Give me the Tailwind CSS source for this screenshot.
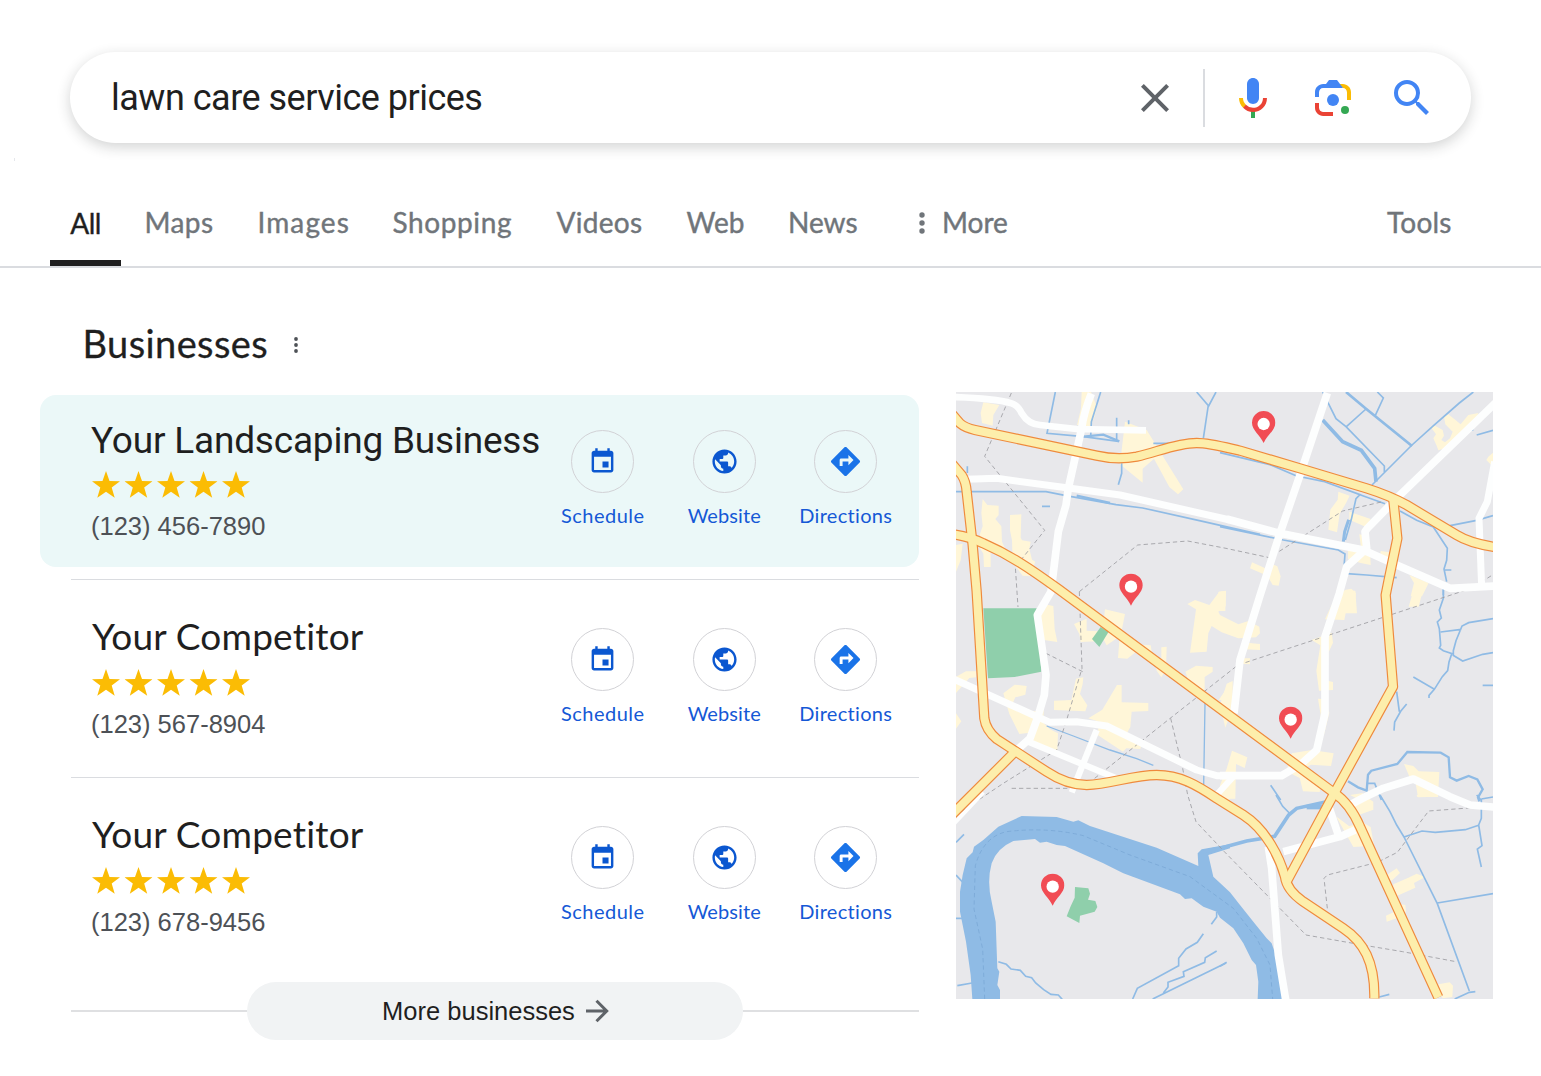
<!DOCTYPE html>
<html lang="en">
<head>
    <meta charset="UTF-8">
    <meta name="viewport" content="width=device-width, initial-scale=1.0">
    <title>lawn care service prices</title>
    <script src="https://cdn.jsdelivr.net/npm/@tailwindcss/browser@4"></script>
</head>
<body class="bg-white w-[1541px] h-[1076px] overflow-hidden font-[Lato,sans-serif] [font-variant-ligatures:none] text-[#1f1f1f]">

    <!-- Icon sprite -->
    <svg class="hidden">
        <symbol id="star" viewBox="0 0 28 27"><path fill="#fbbc04" d="M14 0l3.5 9.9 10.5.3-8.3 6.4 3 10.2-8.7-6-8.7 6 3-10.2L0 10.2l10.5-.3z"/></symbol>
        <symbol id="stars" viewBox="0 0 158 27">
            <use href="#star" x="0" width="28" height="27"/><use href="#star" x="32.5" width="28" height="27"/><use href="#star" x="65" width="28" height="27"/><use href="#star" x="97.5" width="28" height="27"/><use href="#star" x="130" width="28" height="27"/>
        </symbol>
        <symbol id="event" viewBox="0 0 24 24"><path fill="#0b57d0" d="M17 12h-5v5h5v-5zM16 1v2H8V1H6v2H5c-1.11 0-1.99.9-1.99 2L3 19c0 1.1.89 2 2 2h14c1.1 0 2-.9 2-2V5c0-1.1-.9-2-2-2h-1V1h-2zm3 18H5V8h14v11z"/></symbol>
        <symbol id="globe" viewBox="0 0 24 24"><path fill="#0b57d0" d="M12 2C6.48 2 2 6.48 2 12s4.48 10 10 10 10-4.48 10-10S17.52 2 12 2zm-1 17.93c-3.95-.49-7-3.85-7-7.93 0-.62.08-1.21.21-1.79L9 15v1c0 1.1.9 2 2 2v1.93zm6.9-2.54c-.26-.81-1-1.39-1.9-1.39h-1v-3c0-.55-.45-1-1-1H8v-2h2c.55 0 1-.45 1-1V7h2c1.1 0 2-.9 2-2v-.41c2.93 1.19 5 4.06 5 7.41 0 2.08-.8 3.97-2.1 5.39z"/></symbol>
        <symbol id="directions" viewBox="0 0 24 24"><path fill="#1a73e8" d="M21.71 11.29l-9-9c-.39-.39-1.02-.39-1.41 0l-9 9c-.39.39-.39 1.02 0 1.41l9 9c.39.39 1.02.39 1.41 0l9-9c.39-.38.39-1.01 0-1.41zM14 14.5V12h-4v3H8v-4c0-.55.45-1 1-1h5V7.5l3.5 3.5-3.5 3.5z"/></symbol>
        <symbol id="pin" viewBox="-36 -38 72 98"><path fill="#f14c54" d="M0 59C-11 35-35 20-35-2a35 35 0 1 1 70 0C35 20 11 35 0 59z"/><circle cy="2" r="18.5" fill="#fff"/></symbol>
    </svg>

    <!-- Search bar -->
    <header class="pt-[52px] pl-[70px]">
        <div class="flex items-center w-[1401px] h-[91px] rounded-full bg-white pl-[41px] pr-[35px] shadow-[0_4px_14px_rgba(32,33,36,0.2)]">
            <span class="flex-1 font-[Roboto,sans-serif] text-[36px] leading-[44px] tracking-[-0.5px]">lawn care service prices</span>
            <svg class="w-12 h-12" viewBox="0 0 24 24"><path fill="#5f6368" d="M19 6.41L17.59 5 12 10.59 6.41 5 5 6.41 10.59 12 5 17.59 6.41 19 12 13.41 17.59 19 19 17.59 13.41 12z"/></svg>
            <div class="w-0.5 h-[58px] bg-[#dadce0] ml-6 mr-6"></div>
            <svg class="w-12 h-12" viewBox="0 0 24 24">
                <path fill="#4285f4" d="M12 15c1.66 0 3-1.31 3-2.97V5.01C15 3.35 13.66 2 12 2S9 3.34 9 5.01v7.02C9 13.69 10.34 15 12 15z"/>
                <path fill="#34a853" d="M11 18.08h2V22h-2z"/>
                <path fill="#fbbc05" d="M7.05 16.87C5.78 15.54 5 14.04 5 12h2c0 1.45.56 2.42 1.47 3.38v.32l-1.15 1.18z"/>
                <path fill="#ea4335" d="M12 16.93a4.97 5.25 0 0 1-3.54-1.55l-1.41 1.49C8.31 18.21 10.07 19 12 19c3.87 0 6.99-2.92 6.99-7H17c0 2.92-2.24 4.93-5 4.93z"/>
            </svg>
            <svg class="w-12 h-12 ml-8" viewBox="0 0 192 192">
                <circle fill="#34a853" cx="144" cy="144" r="16"/>
                <circle fill="#4285f4" cx="96" cy="104" r="24"/>
                <path fill="#ea4335" d="M24 135.2C24 153.31 38.69 168 56.8 168H96v-16l-40.1-.1c-8.8 0-15.9-8.19-15.9-17.9v-18H24z"/>
                <path fill="#fbbc04" d="M168 72.8C168 54.69 153.31 40 135.2 40H116l20 16c8.8 0 16 8.29 16 18v30h16z"/>
                <path fill="#4285f4" d="M112 24H80L68 40H56.8C38.69 40 24 54.69 24 72.8V92h16V74c0-9.71 7.2-18 16-18h80z"/>
            </svg>
            <svg class="w-12 h-12 ml-[31px]" viewBox="0 0 24 24"><path fill="#4285f4" d="M15.5 14h-.79l-.28-.27A6.471 6.471 0 0 0 16 9.5 6.5 6.5 0 1 0 9.5 16c1.61 0 3.09-.59 4.23-1.57l.27.28v.79l5 4.99L20.49 19l-4.99-5zm-6 0C7.01 14 5 11.99 5 9.5S7.01 5 9.5 5 14 7.01 14 9.5 11.99 14 9.5 14z"/></svg>
        </div>
    </header>
    <div class="w-px h-[3px] bg-gray-200 ml-[14px] mt-[15px]"></div>

    <!-- Tabs -->
    <nav class="flex h-[107px] border-b-2 border-[#dadce0] pl-[50px] pt-[43px] text-[28px] leading-[36px] text-[#70757a] [-webkit-text-stroke:0.4px]">
        <a class="w-[71px] h-[62px] pt-px border-b-6 border-[#1f1f1f] text-center text-[#1f1f1f] tracking-[-0.6px]">All</a>
        <a class="w-[113px] ml-[23.5px] tracking-[0.4px]">Maps</a>
        <a class="w-[135px] tracking-[1.1px]">Images</a>
        <a class="w-[164px] tracking-[0.6px]">Shopping</a>
        <a class="w-[130px] tracking-[0.3px]">Videos</a>
        <a class="w-[101.5px]">Web</a>
        <a class="w-[131px]">News</a>
        <svg class="w-[6px] h-[24px] mt-[8px]" viewBox="0 0 6 24" fill="#70757a" stroke="none"><circle cx="3" cy="3" r="2.7"/><circle cx="3" cy="11" r="2.7"/><circle cx="3" cy="19" r="2.7"/></svg>
        <a class="ml-[17px] w-[445px]">More</a>
        <a class="tracking-[0.2px]">Tools</a>
    </nav>

    <main class="flex">
        <section class="w-[919px]">
            <div class="flex items-center h-[48px] mt-[51px] ml-[82.5px]">
                <h1 class="text-[38px] leading-[48px] tracking-[0.4px] [-webkit-text-stroke:0.3px]">Businesses</h1>
                <svg class="w-[4px] h-[16px] ml-[26px] mt-[4px]" viewBox="0 0 4 16" fill="#4d5156"><circle cx="2" cy="2" r="1.9"/><circle cx="2" cy="8" r="1.9"/><circle cx="2" cy="14" r="1.9"/></svg>
            </div>

            <!-- Highlighted business -->
            <article class="flex mt-[28px] ml-[40px] h-[172px] rounded-2xl bg-[#ebf8f8] pl-[51px]">
                <div class="w-[451px] pt-[24px]">
                    <h2 class="font-[Roboto,sans-serif] text-[37px] leading-[44px] tracking-[-0.2px] whitespace-nowrap">Your Landscaping Business</h2>
                    <svg class="w-[158px] h-[27px] ml-px mt-[8px]"><use href="#stars"/></svg>
                    <p class="font-[Liberation_Sans,sans-serif] text-[25.5px] leading-[30px] mt-[13px] text-[#4d5156]">(123) 456-7890</p>
                </div>
                <div class="flex pt-[35px] text-[20px] leading-[24px] text-[#1558d6] text-center">
                    <a class="w-[121.5px] tracking-[0.5px]"><span class="flex items-center justify-center size-[63px] mx-auto mb-[10px] rounded-full border border-[#d2d2d6]"><svg class="size-[29px]"><use href="#event"/></svg></span>Schedule</a>
                    <a class="w-[121.5px] tracking-[0.1px]"><span class="flex items-center justify-center size-[63px] mx-auto mb-[10px] rounded-full border border-[#d2d2d6]"><svg class="size-[29px]"><use href="#globe"/></svg></span>Website</a>
                    <a class="w-[121.5px] tracking-[0.3px]"><span class="flex items-center justify-center size-[63px] mx-auto mb-[10px] rounded-full border border-[#d2d2d6]"><svg class="size-[35px]"><use href="#directions"/></svg></span>Directions</a>
                </div>
            </article>
            <hr class="mt-3 mb-[13px] ml-[71px] border-[#dadce0]">

            <article class="flex ml-[40px] h-[172px] pl-[51px]">
                <div class="w-[451px] pt-[21px]">
                    <h2 class="text-[37px] leading-[44px] tracking-[0.2px] ml-px whitespace-nowrap">Your Competitor</h2>
                    <svg class="w-[158px] h-[27px] ml-px mt-[11px]"><use href="#stars"/></svg>
                    <p class="font-[Liberation_Sans,sans-serif] text-[25.5px] leading-[30px] mt-[13px] text-[#4d5156]">(123) 567-8904</p>
                </div>
                <div class="flex pt-[35px] text-[20px] leading-[24px] text-[#1558d6] text-center">
                    <a class="w-[121.5px] tracking-[0.5px]"><span class="flex items-center justify-center size-[63px] mx-auto mb-[10px] rounded-full border border-[#d2d2d6]"><svg class="size-[29px]"><use href="#event"/></svg></span>Schedule</a>
                    <a class="w-[121.5px] tracking-[0.1px]"><span class="flex items-center justify-center size-[63px] mx-auto mb-[10px] rounded-full border border-[#d2d2d6]"><svg class="size-[29px]"><use href="#globe"/></svg></span>Website</a>
                    <a class="w-[121.5px] tracking-[0.3px]"><span class="flex items-center justify-center size-[63px] mx-auto mb-[10px] rounded-full border border-[#d2d2d6]"><svg class="size-[35px]"><use href="#directions"/></svg></span>Directions</a>
                </div>
            </article>
            <hr class="mt-3 mb-[13px] ml-[71px] border-[#dadce0]">

            <article class="flex ml-[40px] h-[172px] pl-[51px]">
                <div class="w-[451px] pt-[21px]">
                    <h2 class="text-[37px] leading-[44px] tracking-[0.2px] ml-px whitespace-nowrap">Your Competitor</h2>
                    <svg class="w-[158px] h-[27px] ml-px mt-[11px]"><use href="#stars"/></svg>
                    <p class="font-[Liberation_Sans,sans-serif] text-[25.5px] leading-[30px] mt-[13px] text-[#4d5156]">(123) 678-9456</p>
                </div>
                <div class="flex pt-[35px] text-[20px] leading-[24px] text-[#1558d6] text-center">
                    <a class="w-[121.5px] tracking-[0.5px]"><span class="flex items-center justify-center size-[63px] mx-auto mb-[10px] rounded-full border border-[#d2d2d6]"><svg class="size-[29px]"><use href="#event"/></svg></span>Schedule</a>
                    <a class="w-[121.5px] tracking-[0.1px]"><span class="flex items-center justify-center size-[63px] mx-auto mb-[10px] rounded-full border border-[#d2d2d6]"><svg class="size-[29px]"><use href="#globe"/></svg></span>Website</a>
                    <a class="w-[121.5px] tracking-[0.3px]"><span class="flex items-center justify-center size-[63px] mx-auto mb-[10px] rounded-full border border-[#d2d2d6]"><svg class="size-[35px]"><use href="#directions"/></svg></span>Directions</a>
                </div>
            </article>

            <!-- More businesses -->
            <div class="flex items-center mt-[19px] ml-[71px]">
                <div class="flex-1 h-0.5 bg-[#dfe0e2]"></div>
                <button class="flex items-center justify-center w-[496px] h-[58px] rounded-full bg-[#f1f3f4] pl-px font-[Liberation_Sans,sans-serif] text-[25.5px] leading-[30px]">
                    <span>More businesses</span>
                    <svg class="w-[23px] h-[24px] ml-[11px]" viewBox="0 0 23 24" fill="none" stroke="#5f6368" stroke-width="3"><path d="M0 12H20M10.500 1.800L20.700 12 10.500 22.200"/></svg>
                </button>
                <div class="w-[176px] h-0.5 bg-[#dfe0e2]"></div>
            </div>
        </section>

        <!-- Map -->
        <svg class="w-[537px] h-[607px] ml-[37px] mt-[124px]" viewBox="18 21 1611 1821">
            <defs>
                <g id="roads">
                    <path d="M0 80L30 115Q45 128 75 135L440 212Q500 226 560 215C620 202 680 174 740 174 780 174 830 188 870 197L1050 250 1250 310Q1320 332 1370 360L1520 450Q1560 475 1640 487"/>
                    <path d="M5 235L35 270Q48 290 50 320L68 480 80 620 103 1000Q108 1035 140 1062L290 1160Q350 1200 410 1200C480 1198 550 1170 620 1170 690 1170 740 1200 800 1240L880 1290C950 1335 990 1420 1005 1475Q1010 1515 1060 1550L1180 1630C1240 1670 1275 1730 1273 1840"/>
                    <path d="M10 448Q60 455 100 475C180 510 240 550 325 612L840 993 1150 1222Q1200 1255 1230 1325L1465 1837"/>
                    <path d="M1330 345L1342 460 1315 590 1307 630 1329 905 1150 1230 1010 1490"/>
                    <path d="M192 1103L0 1295"/>
                </g>
            </defs>
            <rect x="18" y="21" width="1611" height="1821" fill="#e8e8eb"/>

            <!-- built-up areas -->
            <g fill="#fff6d8">
                <path d="M100 52l48 8-18 30-2 32-32-8-4-30zM395 21h28l18 45-8 30-12 30-40-6 12-50zM525 110l65 25 110 178-16 15-26-22-46-85-34 30v42l-68-55zM98 342l14 18 34 2v28l-10 12 18 22 2 46 10 22-12 18-32-8v44h-20l-2-40-12-20 2-40 8-22-4-40zM180 390l34-2-2 70 4 8 26 4-4 22 8 32 10 6-16 44-22-2-30-40-2-66-6-30zM18 480l20-4-6 50-14 34zM806 620l22-2-2 60h-40z"/>
                <path transform="translate(810 0)" d="M355 320l34 12-12 24-18 30-8 56-26-8 6-60 22-30zM388 380l64 22-14 24-50-22zM418 448l26 6 6 40 2 46-30-6-38-12v-26h40zM632 125L645 122 668 135 672 152 664 165 675 172 690 160 698 140 676 118 672 95 685 88 700 100 722 118 745 90 775 84 770 100 690 185 655 196 650 182 640 160 648 148zM805 215l14-12v42l-20-20zM96 532l50 22 12-16 14 6 10 30-6 28-18-2-16-28-52-22zM374 615l20-4 14 14-4 20h-40zM482 498l26 4-2 24-26-8zM568 570l58 24-20 40h-34l10-40z"/>
                <path transform="translate(0 615)" d="M280 42l30 6 4 70 8 38-40-6-20-70zM372 102l38-16v36l36 2-4 30-50 2-4-24zM465 58l60 14-10 50-10 20-35 24-20-36 10-30zM508 152l28 10 66 4 6 34-26-6-20-12-30 24-28-2zM634 172l16-2-2 70-14 22-14-20-6-38 20 2zM712 42L735 30 778 45 808 5 827 2V48L805 65 810 75 865 103 895 93 928 110 930 130 918 142 865 145 815 127 785 108 775 130 770 185 720 188 735 80 738 58zM706 245l32-18 50 4v14l-24 16v56l-44-32zM820 310l20-34v54l-34 0zM18 260l30-16h30v18l-20 2-40 45zM18 370l16 24-16 22zM160 310l34-26 36 4-4 26-30 8-8 18 24 20 46 4 24-26-2 60 20 20 24 12-2 52-72-14-12-40-30 4-30-60zM378 266l22-4-2 20-8 30 22 34-6 18-94-4v-28l52-2zM415 385l42-26 44-74h14v52l80 2v24l-50 2-4 46-10 18 28 26 18-4-6 26-42-2-10 10-76-50 4-40z"/>
                <path transform="translate(810 615)" d="M80 158l40 4v18l-45-2zM70 205h20v18l-24-2zM0 345l20-64 18-8v80l-22 60zM356 2h50l5 68h-34l-4 20-58-2 14-30zM275 150l60-22 4 30-14 30-2 84 16 4v24l-42 2-8-60 12-76zM294 326l20 2 14 40-16 66h-16l6-60zM215 490l60-10 66 10-8 38-60-4-20 10 50 44-4 28-50-2-10-40-40-20zM36 482l46 20-8 32-26-12-2 104H0v-40l20-50zM552 522l28 6 16 16 62 2-4 74-60 2-8-48-16-10zM566 50l14-48h28l-12 48zM390 615l40-6-10 21z"/>
                <path transform="translate(810 1230)" d="M0 0h30L22 40 0 12zM430 0l30 20v24l-50 18-30-30zM348 64l40 30 36-14 28 16 10 56-62 4zM500 240l30-20 10 14-26 24zM520 268L565 248 590 236 616 246 582 264 586 278 532 302 534 326 556 330 558 350 550 358 558 378 548 388 530 370 500 380 498 362 520 352z"/>
                <path transform="translate(810 1230)" d="M655 568l34-6 10 10-2 34-30 4zM590 0h24v6h-22zM634 0h20v6h-20z"/>
            </g>

            <!-- parks -->
            <g fill="#8fcfab">
                <path d="M100 670h160l14 190-80 16-80 4z"/>
                <path d="M452 726l24 14-28 46-22-24z"/>
                <path d="M375 1506l40 4 5 16-6 18 22 4 6 18-8 14-44 12-2 22-38-20 12-30 12-26z"/>
            </g>

            <!-- river -->
            <path transform="translate(0 1230)" fill="#8fbbe5" d="M67 612L62 540 48 440 30 350V290L38 240 50 190 68 172 72 155 100 135 145 95 215 63 320 66 370 80 385 76 420 93 620 158 745 213 743 175 755 163 840 148V160L775 180 790 245 840 292 870 330 910 380 950 430 965 445 975 475 1000 612H923L925 560 918 510 905 495 880 445 850 400 810 368 800 350 760 335 725 310 705 312 690 298 520 235 460 205 345 153 320 150 290 140 270 143 255 132 190 138Q140 160 125 205 110 260 125 320L137 380 142 520 148 530 142 570 150 585V612z"/>

            <!-- streams and canals -->
            <g fill="none" stroke="#8fbbe5" stroke-width="5">
                <path d="M316 21l-25 124 110 10 104 14M452 21l-28 90-2 45M500 98v66M515 235v30l-10 34M536 106v12M52 244v20M276 364h24M610 175h50M740 21l36 42 22-42M775 60l-15 100M18 320h130l140 0 60 12 150 27 80 10 170 38 182 41"/>
                <path d="M400 155l60-6 48 20M380 332l100 22" stroke-width="7"/>
                <path transform="translate(810 0)" d="M308 21l40 80 30 24 115 118v18M380 124l58-52M472 21l18 18-24 52M456 300l120-120 62-56 80-70 42-33M770 150l49-14M0 203l150 36 80 34M230 273l80 16 110 40-12 12-14 62-18 62M420 329l75 27M0 425l190 40 165 30 20 12-4 52M380 566l60 4 90 8M540 378l50 28 50 20 42 64-2 36-8 26 8 38M672 555h22M690 422l80-16 49-14M786 100l6-2M754 136l6-2M670 610v20"/>
                <path transform="translate(810 0)" stroke-width="8" d="M378 21l60 50 138 112"/>
                <path transform="translate(810 0)" stroke-width="11" d="M308 105l60 65 56 26 40 54 4 40"/>
                <path transform="translate(810 0)" stroke-width="9" d="M386 404l-12 36-4 30"/>
                <path transform="translate(0 615)" d="M290 408l80 30 110 42 80 26 50 20M765 340l-4 245" stroke-width="4"/>
                <path transform="translate(810 615)" d="M670 0v25l-12 35 6 24-12 12 6 20 4 50-4 8 12 8 30 10v-10l8-30 18-44 20-10 73-12M662 126l62-8M698 195l30 18 60-20 31-5M695 192l-8 24-4 26-16 18-24 38-16 18v8M580 261l62 36M788 286h31M530 305l8 60M560 342l-18 22-18 32-2 26M152 586l30 44M440 580h24l20 50"/>
                <path transform="translate(810 615)" stroke-width="7" d="M384 574l30 18 26 10 4-48 10-12 78-20 30-36 100 2 24 14 4 60 20 10 36-14 26 10 16 30-14 24 4 12"/>
                <path transform="translate(0 1230)" d="M18 142l24-24M18 240l24 26M18 370h20M22 572l44-8M145 500l24 8 14 14 28 4 16 18 18 4 12 16 24 20 22 14 22 2 16 18M548 612l14-32 124-68v-22l22-28 34-20 18-26M640 594l14-18v-14l48-18-2-14 64-28 2-14 34-20M608 612l220-108M800 350v16l-16 22"/>
                <path transform="translate(810 1230)" d="M168 0l20 34 20 20M480 0l30 50 20 40 22 36 54-18 40 4 90-8 42-14M770 0l14 16v54l-8 20 10 62-14 10 12 54M784 12l35-6M552 126l100 200 96 262M652 324l167-28M704 612l44-20 18-2M478 606l30-8M0 514l20-12"/>
                <path transform="translate(810 1230)" stroke-width="11" d="M-50 170L0 160l80-22 84-14 42-64 24-20 90-20"/>
                <path transform="translate(810 1230)" stroke-width="14" d="M260 36h60"/>
            </g>

            <!-- boundaries -->
            <g fill="none" stroke="#9b9ba0" stroke-width="2.5" stroke-dasharray="13 9">
                <path d="M184 24l-80 190 180 222-88 110 8 120M388 620l175-140 150-12 115 22 130 28 220-140 120-28"/>
                <path d="M388 620l8 230-46 155-30 90-160 100-60 40-65 45M288 805l110 55M434 1180l220-175 210-165 700-230 95-60M662 1000l36 150 15 80 25 80 85 90 245 250 170 30 120 20 160 30"/>
                <path d="M185 1210h180M1132 1570l-10-90 10-10 150-38 60-30 94-124 200-15"/>
            </g>
            <path transform="translate(0 1230)" fill="none" stroke="#7ba8d6" stroke-width="2.5" stroke-dasharray="13 9" d="M104 612l-6-150-26-120 4-130Q100 125 170 110 290 95 400 122L540 180 720 245 850 340 920 430 960 510 968 612"/>

            <!-- streets -->
            <g fill="none" stroke="#fdfefe" stroke-width="23" stroke-linejoin="round">
                <path stroke-width="20" d="M0 36C80 38 150 45 185 55Q205 62 215 85 235 118 270 120L380 132 588 136"/>
                <path d="M424 26Q402 80 395 130L355 310 348 360 325 440 303 620 262 690 275 780 288 870 283 930 262 1000 240 1060 195 1100"/>
                <path stroke-width="21" d="M50 283L140 280 350 308 510 330 840 405"/>
                <path d="M830 402L990 445 1240 495 1340 540 1500 610 1640 603M1132 24L1050 270 990 445 932 625 870 825 852 985M1640 50L1340 340 1252 430 1245 440 1250 490 1190 545 1168 625 1125 755 1125 985 1100 1095 1050 1140 995 1172H810"/>
                <path stroke-width="21" d="M1634 230L1612 350 1587 400 1595 605M0 877L250 990 300 1012 380 1010 470 1023 740 1155 800 1172H840"/>
                <path stroke-width="19" d="M230 1068L500 1180M440 1035L365 1222M790 1240L850 1175"/>
                <path d="M1000 1400L1170 1355 1215 1335M1138 1270L1165 1350M1190 1265L1245 1236 1300 1210 1390 1182 1500 1235 1560 1260 1640 1267M955 1385L965 1450 985 1710 1008 1850"/>
                <path stroke-width="12" d="M10 1318L100 1222"/>
            </g>

            <!-- main roads, orange casing under the yellow fill -->
            <use href="#roads" fill="none" stroke="#ef8a3d" stroke-width="31" stroke-linejoin="round"/>
            <use href="#roads" fill="none" stroke="#fdeeab" stroke-width="24" stroke-linejoin="round"/>

            <!-- pins -->
            <use href="#pin" x="905" y="77" width="72" height="98"/>
            <use href="#pin" x="507" y="565" width="72" height="98"/>
            <use href="#pin" x="986" y="964" width="72" height="98"/>
            <use href="#pin" x="272" y="1465" width="72" height="98"/>
        </svg>
    </main>
</body>
</html>
